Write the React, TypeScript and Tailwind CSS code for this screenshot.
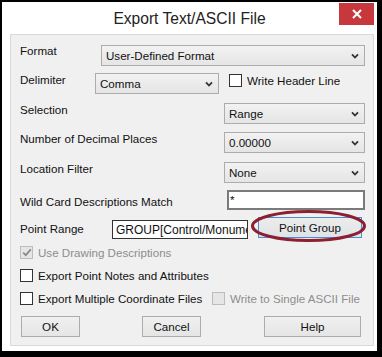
import React from 'react';

const font = { fontFamily: '"Liberation Sans", Arial, sans-serif' };

// Small chevron used by the combo boxes
const Chevron = () => (
  <svg width="8" height="6" viewBox="0 0 8 6" className="shrink-0">
    <path d="M1 1.3 L4 4.5 L7 1.3" fill="none" stroke="#333" strokeWidth="1.8" />
  </svg>
);

interface ComboProps {
  value: string;
  className?: string;
}

const Combo: React.FC<ComboProps> = ({ value, className = '' }) => (
  <div
    className={`flex h-[21px] items-center justify-between border border-[#acacac] bg-gradient-to-b from-[#f2f2f2] to-[#e5e5e5] pl-[4px] pr-[5px] text-[11.6px] text-[#111] ${className}`}
  >
    <span className="leading-none">{value}</span>
    <Chevron />
  </div>
);

interface CheckProps {
  label: string;
  checked?: boolean;
  disabled?: boolean;
}

const Check: React.FC<CheckProps> = ({ label, checked = false, disabled = false }) => (
  <div className="flex h-[13px] items-center gap-[5px]">
    <div
      className={`flex h-[13px] w-[13px] items-center justify-center border ${
        disabled ? 'border-[#bcbcbc] bg-[#e6e6e6]' : 'border-[#333] bg-white'
      }`}
    >
      {checked && (
        <svg width="10" height="9" viewBox="0 0 10 9">
          <path d="M1.2 4.6 L3.8 7.2 L8.8 1.4" fill="none" stroke="#8a8a8a" strokeWidth="1.8" />
        </svg>
      )}
    </div>
    <span className={`whitespace-nowrap text-[11.6px] leading-[14px] ${disabled ? 'text-[#8d8d8d]' : 'text-[#111]'}`}>
      {label}
    </span>
  </div>
);

const Button: React.FC<{ label: string; className?: string }> = ({ label, className = '' }) => (
  <div
    className={`flex h-[21px] items-center justify-center border border-[#acacac] bg-gradient-to-b from-[#f0f0f0] to-[#e5e5e5] text-[11.6px] text-[#111] ${className}`}
  >
    {label}
  </div>
);

export default function App() {
  return (
    <div className="h-[357px] w-[382px] bg-black pl-[2px] pr-[5px] pt-[2px] pb-[6px]" style={font}>
      <div className="flex h-full w-full flex-col bg-white">
        {/* Title bar */}
        <div className="relative flex h-[32px] shrink-0 items-center justify-center">
          <span className="pt-[1px] text-[15.6px] text-[#222]">Export Text/ASCII File</span>
          <div className="absolute right-[3px] top-[1px] flex h-[22px] w-[35px] items-center justify-center bg-[#c7383c]">
            <svg width="10" height="10" viewBox="0 0 10 10">
              <path d="M1 1 L9 9 M9 1 L1 9" stroke="#fff" strokeWidth="2" />
            </svg>
          </div>
        </div>

        {/* Client area */}
        <div className="ml-[8px] mr-[3px] flex h-[312px] flex-col border border-[#d9d9d9] bg-[#f0f0f0] px-[9px] text-[11.6px] text-[#111]">
          {/* Format */}
          <div className="mt-[10px] flex h-[21px] items-start">
            <span className="mt-[-1px] w-[81px] leading-[14px]">Format</span>
            <Combo value="User-Defined Format" className="flex-1 mr-[-1px]" />
          </div>

          {/* Delimiter */}
          <div className="mt-[7px] flex h-[21px] items-start">
            <span className="w-[75px] leading-[14px]">Delimiter</span>
            <Combo value="Comma" className="w-[124px]" />
            <div className="ml-[10px] mt-[1px]">
              <Check label="Write Header Line" />
            </div>
          </div>

          {/* Selection */}
          <div className="mt-[9px] flex h-[21px] items-start justify-between">
            <span className="leading-[14px]">Selection</span>
            <Combo value="Range" className="w-[141px] mr-[-1px]" />
          </div>

          {/* Decimal places */}
          <div className="mt-[8px] flex h-[21px] items-start justify-between">
            <span className="leading-[14px]">Number of Decimal Places</span>
            <Combo value="0.00000" className="w-[141px] mr-[-1px]" />
          </div>

          {/* Location filter */}
          <div className="mt-[9px] flex h-[21px] items-start justify-between">
            <span className="leading-[14px]">Location Filter</span>
            <Combo value="None" className="w-[141px] mr-[-1px]" />
          </div>

          {/* Wild card */}
          <div className="mt-[7px] flex h-[20px] items-start justify-between">
            <span className="mt-[5px] leading-[14px]">Wild Card Descriptions Match</span>
            <div className="mr-[-1px] flex h-[20px] w-[138px] items-start border-2 border-[#7a7a7a] bg-white pl-[1px] pt-[1px] leading-[14px]">
              *
            </div>
          </div>

          {/* Point range */}
          <div className="relative mt-[7px] flex h-[23px] items-start">
            <span className="mt-[5px] w-[92px] leading-[14px]">Point Range</span>
            <div className="mt-[3px] flex h-[19px] w-[136px] items-center overflow-hidden whitespace-nowrap border border-[#333] bg-white pl-[3px] text-[12px]">
              GROUP[Control/Monuments]
            </div>
            <div className="ml-[10px] flex h-[21px] w-[104px] items-center justify-center border border-[#4a8fd6] bg-gradient-to-b from-[#ececec] to-[#e0e3e6]">
              Point Group
            </div>
            {/* annotation ellipse */}
            <svg className="pointer-events-none absolute left-[230px] top-[-7px]" width="118" height="34" viewBox="0 0 118 34">
              <ellipse cx="58.5" cy="16" rx="56" ry="14.5" fill="none" stroke="#8c1f31" strokeWidth="3" />
            </svg>
          </div>

          {/* Checkboxes */}
          <div className="mt-[6px]">
            <Check label="Use Drawing Descriptions" checked disabled />
          </div>
          <div className="mt-[10px]">
            <Check label="Export Point Notes and Attributes" />
          </div>
          <div className="mt-[10px] flex">
            <div className="w-[192px]">
              <Check label="Export Multiple Coordinate Files" />
            </div>
            <Check label="Write to Single ASCII File" disabled />
          </div>

          {/* Buttons */}
          <div className="mt-[11px] flex items-start">
            <Button label="OK" className="ml-[1px] w-[59px]" />
            <Button label="Cancel" className="ml-[62px] w-[59px]" />
            <Button label="Help" className="ml-[63px] w-[97px]" />
          </div>
        </div>
      </div>
    </div>
  );
}
